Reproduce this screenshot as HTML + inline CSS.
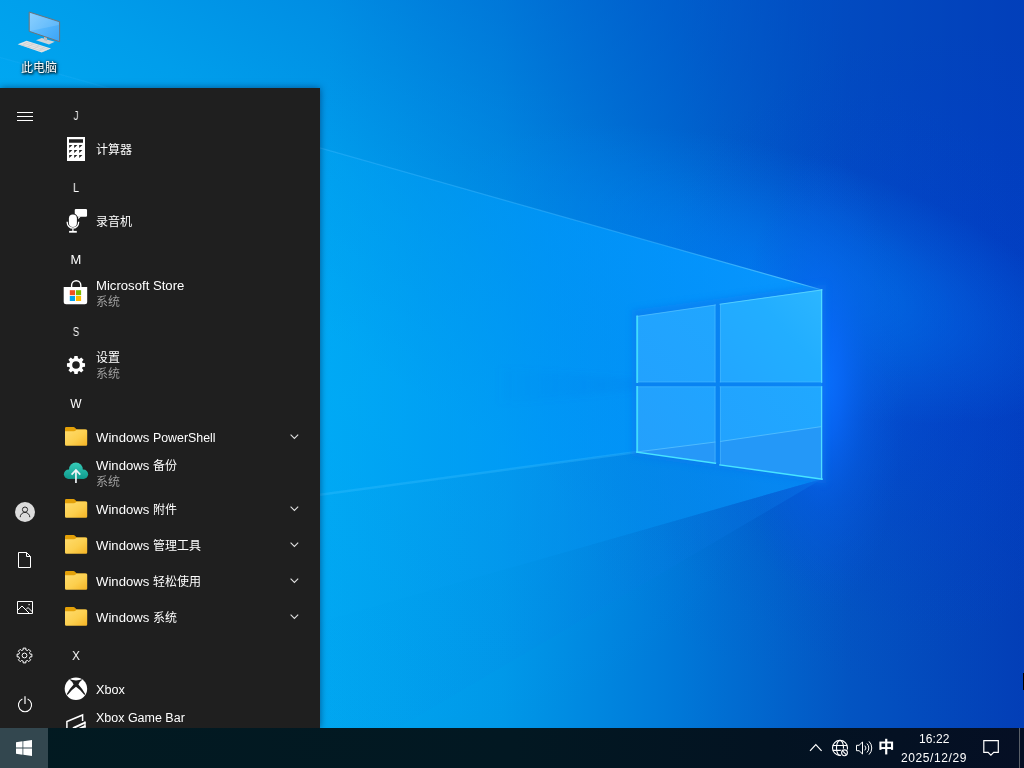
<!DOCTYPE html>
<html lang="zh-CN"><head><meta charset="utf-8"><title>Desktop</title>
<style>
html,body{margin:0;padding:0;background:#0560c8;}
body{width:1024px;height:768px;overflow:hidden;position:relative;font-family:"Liberation Sans",sans-serif;color:#fff;}
.abs,.cj{position:absolute;}
svg{display:block;overflow:visible}
.t{position:absolute;white-space:nowrap;font-size:12px;line-height:16px;color:#fff;transform-origin:0 0;will-change:transform;}
.cjt{font-family:"Liberation Sans","Noto Sans CJK SC",sans-serif;}

#menu{position:absolute;left:0;top:88px;width:320px;height:640px;background:#1f1f1f;overflow:hidden;box-shadow:0 0 7px rgba(0,20,60,.55)}

#task{position:absolute;left:0;top:728px;width:1024px;height:40px;background:linear-gradient(90deg,#021a21 0,#021822 50%,#031322 75%,#050f24 100%)}
#start{position:absolute;left:0;top:0;width:48px;height:40px;background:#33474f}

</style></head><body>
<svg class="abs" style="left:0;top:0" width="1024" height="768" viewBox="0 0 1024 768">
<defs>
<linearGradient id="bg" x1="0" y1="0" x2="1024" y2="0" gradientUnits="userSpaceOnUse">
<stop offset="0" stop-color="#00a8f0"/><stop offset="0.32" stop-color="#00a8f0"/><stop offset="0.49" stop-color="#0098e8"/><stop offset="0.66" stop-color="#0078d8"/><stop offset="0.83" stop-color="#0354c2"/><stop offset="1" stop-color="#033eb6"/>
</linearGradient>
<radialGradient id="lite" cx="330" cy="400" r="360" gradientUnits="userSpaceOnUse" gradientTransform="translate(330 400) scale(1.3 1) translate(-330 -400)">
<stop offset="0" stop-color="#00b0ff" stop-opacity="0.3"/><stop offset="0.5" stop-color="#00a8ff" stop-opacity="0.15"/><stop offset="1" stop-color="#00a0ff" stop-opacity="0"/>
</radialGradient>
<radialGradient id="glow" cx="822" cy="382" r="210" gradientUnits="userSpaceOnUse" gradientTransform="translate(822 382) scale(0.4 1.1) translate(-822 -382)">
<stop offset="0" stop-color="#0a70ff" stop-opacity="1"/><stop offset="0.25" stop-color="#0868f8" stop-opacity="0.8"/><stop offset="0.55" stop-color="#0660e8" stop-opacity="0.4"/><stop offset="1" stop-color="#0558d8" stop-opacity="0"/>
</radialGradient>
<radialGradient id="glow2" cx="830" cy="385" r="300" gradientUnits="userSpaceOnUse"><stop offset="0" stop-color="#0a64f4" stop-opacity="0.3"/><stop offset="0.4" stop-color="#0858e4" stop-opacity="0.12"/><stop offset="0.75" stop-color="#0650d4" stop-opacity="0.04"/><stop offset="1" stop-color="#0650d0" stop-opacity="0"/></radialGradient>
<radialGradient id="rblue" cx="950" cy="330" r="300" gradientUnits="userSpaceOnUse"><stop offset="0" stop-color="#023cd0" stop-opacity="0.5"/><stop offset="1" stop-color="#023cd0" stop-opacity="0"/></radialGradient>
<radialGradient id="glow3" cx="0" cy="0" r="1" gradientUnits="userSpaceOnUse" gradientTransform="translate(770 274) rotate(15.800) scale(330 125)"><stop offset="0" stop-color="#0088ff" stop-opacity="0.62"/><stop offset="0.35" stop-color="#008cff" stop-opacity="0.4"/><stop offset="0.7" stop-color="#0090ff" stop-opacity="0.16"/><stop offset="1" stop-color="#0090ff" stop-opacity="0"/></radialGradient>
<linearGradient id="beamA" x1="822" y1="0" x2="320" y2="0" gradientUnits="userSpaceOnUse">
<stop offset="0" stop-color="#0a98ff" stop-opacity="0.95"/><stop offset="0.25" stop-color="#0498ff" stop-opacity="0.85"/><stop offset="0.55" stop-color="#009afc" stop-opacity="0.7"/><stop offset="0.8" stop-color="#00a0f8" stop-opacity="0.45"/><stop offset="1" stop-color="#00a8f6" stop-opacity="0.3"/>
</linearGradient>
<linearGradient id="beamB" x1="760" y1="470" x2="330" y2="570" gradientUnits="userSpaceOnUse">
<stop offset="0" stop-color="#068ef6" stop-opacity="0.85"/><stop offset="0.3" stop-color="#0490f2" stop-opacity="0.55"/><stop offset="0.7" stop-color="#0894f0" stop-opacity="0.22"/><stop offset="1" stop-color="#08a0f0" stop-opacity="0.1"/>
</linearGradient>
<linearGradient id="beamC" x1="822" y1="479" x2="400" y2="700" gradientUnits="userSpaceOnUse">
<stop offset="0" stop-color="#0a78ec" stop-opacity="0.45"/><stop offset="0.3" stop-color="#0878e4" stop-opacity="0.2"/><stop offset="1" stop-color="#0888e8" stop-opacity="0.05"/>
</linearGradient>
<linearGradient id="ray1" x1="822" y1="0" x2="0" y2="0" gradientUnits="userSpaceOnUse">
<stop offset="0" stop-color="#60d0ff" stop-opacity="0.85"/><stop offset="0.2" stop-color="#40b8ff" stop-opacity="0.5"/><stop offset="0.6" stop-color="#40b8ff" stop-opacity="0.38"/><stop offset="0.75" stop-color="#40b8ff" stop-opacity="0.2"/><stop offset="1" stop-color="#40b8ff" stop-opacity="0.12"/>
</linearGradient>
<linearGradient id="pTL" x1="637" y1="382" x2="715" y2="305" gradientUnits="userSpaceOnUse"><stop offset="0" stop-color="#22a2fe"/><stop offset="1" stop-color="#20a6ff"/></linearGradient>
<linearGradient id="pTR" x1="720" y1="382" x2="822" y2="290" gradientUnits="userSpaceOnUse"><stop offset="0" stop-color="#22a6ff"/><stop offset="0.6" stop-color="#22aeff"/><stop offset="1" stop-color="#2cb6ff"/></linearGradient>
<linearGradient id="pBL" x1="637" y1="452" x2="715" y2="387" gradientUnits="userSpaceOnUse"><stop offset="0" stop-color="#24a0fc"/><stop offset="1" stop-color="#20a4ff"/></linearGradient>
<linearGradient id="pBR" x1="720" y1="464" x2="822" y2="387" gradientUnits="userSpaceOnUse"><stop offset="0" stop-color="#22a2fe"/><stop offset="1" stop-color="#20a8ff"/></linearGradient>
<linearGradient id="shd" x1="320" y1="0" x2="328" y2="0" gradientUnits="userSpaceOnUse"><stop offset="0" stop-color="#002040" stop-opacity="0.45"/><stop offset="0.4" stop-color="#002040" stop-opacity="0.15"/><stop offset="1" stop-color="#002040" stop-opacity="0"/></linearGradient>
<linearGradient id="topd" x1="800" y1="0" x2="500" y2="450" gradientUnits="userSpaceOnUse"><stop offset="0" stop-color="#0040be" stop-opacity="0.5"/><stop offset="0.16" stop-color="#0040be" stop-opacity="0.45"/><stop offset="0.34" stop-color="#0040be" stop-opacity="0.35"/><stop offset="0.5" stop-color="#0040be" stop-opacity="0.25"/><stop offset="0.75" stop-color="#0040be" stop-opacity="0.1"/><stop offset="1" stop-color="#0040be" stop-opacity="0"/></linearGradient>
<linearGradient id="wedge" x1="636" y1="0" x2="470" y2="0" gradientUnits="userSpaceOnUse"><stop offset="0" stop-color="#0470e0" stop-opacity="0.16"/><stop offset="1" stop-color="#0470e0" stop-opacity="0"/></linearGradient>
<filter id="b1"><feGaussianBlur stdDeviation="0.7"/></filter>
<filter id="b3"><feGaussianBlur stdDeviation="3"/></filter>
<filter id="b8"><feGaussianBlur stdDeviation="8"/></filter>
</defs>
<rect width="1024" height="768" fill="url(#bg)"/>
<rect width="1024" height="768" fill="url(#lite)"/>
<rect width="1024" height="768" fill="url(#topd)"/>
<rect width="1024" height="768" fill="url(#rblue)"/>
<rect width="1024" height="768" fill="url(#glow2)"/>
<rect width="1024" height="768" fill="url(#glow3)"/>
<rect width="1024" height="768" fill="url(#glow)"/>
<polygon points="822,290 0,57.4 0,538 637,452 822,479" fill="url(#beamA)"/>
<polygon points="822,479 637,452 0,538 0,713" fill="url(#beamB)"/>
<polygon points="822,479 0,713 0,768 330,768" fill="url(#beamC)"/>
<line x1="822" y1="290" x2="0" y2="57.4" stroke="url(#ray1)" stroke-width="1.2" filter="url(#b1)"/>
<line x1="637" y1="452" x2="0" y2="538" stroke="#40c0ff" stroke-opacity="0.3" stroke-width="2.5" filter="url(#b1)"/>
<polygon points="636,379 636,390 500,404 500,368" fill="url(#wedge)" filter="url(#b3)"/>
<g id="logo">
<polygon points="632,310 826,284 826,484 632,456" fill="#0878ee" opacity="0.55" filter="url(#b3)"/>
<polygon points="636.5,316.2 715.4,304.7 715.4,382.2 636.5,382.2" fill="url(#pTL)"/>
<polygon points="720,304 822,289.6 822,382.2 720,382.2" fill="url(#pTR)"/>
<polygon points="636.5,386.4 715.4,386.4 715.4,463 636.5,452" fill="url(#pBL)"/>
<polygon points="720,386.4 822,386.4 822,479 720,464.6" fill="url(#pBR)"/>
<polygon points="636.5,452 715.4,442 715.4,463" fill="#2698f8"/>
<polygon points="720,441.5 822,426.5 822,479 720,464.6" fill="#2498f8"/>
<path d="M636.5,452L715.4,442M720,441.5L822,426.5" stroke="#5cc4ff" stroke-width="1" opacity="0.75" fill="none"/>
<g fill="none" stroke-linecap="square">
<path d="M637.2,316.5V382 M637.2,387V451.8" stroke="#40dcfc" stroke-width="1.8"/>
<path d="M637,452.2L715.4,463.2 M720,464.9L822,479.2" stroke="#48e4ff" stroke-width="1.5"/>
<path d="M821.6,290V382 M821.6,387V479" stroke="#50dcff" stroke-width="1.3"/>
<path d="M720,304.2L822,289.9" stroke="#60d8ff" stroke-width="1" opacity="0.8"/>
<path d="M637,316.4L715.4,305" stroke="#60c8ff" stroke-width="1" opacity="0.6"/>
<path d="M715,305V382 M715,387V463 M720.4,304.5V382 M720.4,387V464.5" stroke="#58c0ff" stroke-width="0.8" opacity="0.6"/>
<path d="M637,381.9H715.4 M720,381.9H822 M637,386.8H715.4 M720,386.8H822" stroke="#58c0ff" stroke-width="0.8" opacity="0.5"/>
</g>
</g>
<rect x="1023" y="673" width="1" height="17" fill="#000"/>
</svg><svg class="abs" style="left:14px;top:6px" width="52" height="52" viewBox="14 6 52 52">
<defs><linearGradient id="scr" x1="29" y1="12" x2="60" y2="42" gradientUnits="userSpaceOnUse"><stop offset="0" stop-color="#7ccaff"/><stop offset="0.5" stop-color="#56b6fc"/><stop offset="1" stop-color="#3aa4f6"/></linearGradient></defs>
<polygon points="36,40.2 41.8,38 54.7,41.8 49,44.4" fill="#cfd4d8"/>
<polygon points="44,36 47,36.800 47,41 44,40.300" fill="#b8bec4"/>
<polygon points="29.2,12 59.6,21.700 59.600,41.700 29.200,31.300" fill="url(#scr)" stroke="#6e7479" stroke-width="1"/>
<polygon points="30,13.200 58.800,22.300 58.800,25 30,31" fill="#fff" opacity="0.13"/>
<polygon points="17.700,44.300 26.600,40.800 51,48.400 41.700,52.400" fill="#e4e6e8"/>
<path d="M20.500,44.500L44,51.500M23.400,43.300L46.500,50.400M26,42.200L49,49.300M22,46l4.500-3.800M27,47.600l6.500-4.200M33,49.400l6.500-4.200M38.500,51l6.500-4.200" stroke="#c3c7ca" stroke-width="0.6" fill="none"/>
</svg>
<div class="t cjt" style="left:21.3px;top:59.6px;filter:drop-shadow(1px 1px 1px rgba(0,0,0,.9)) drop-shadow(0 0 1.5px rgba(0,0,0,.6))">此电脑</div><div id="menu"><svg class="abs" style="left:17px;top:24px" width="16" height="9" viewBox="0 0 16 9" ><path d="M0 0h16v1H0zM0 4h16v1H0zM0 8h16v1H0z" fill="#fff"/></svg>
<svg class="abs" style="left:15px;top:414px" width="20" height="20" viewBox="0 0 20 20" ><circle cx="10" cy="10" r="10" fill="#dcdcdc"/><circle cx="10" cy="7.6" r="2.6" fill="none" stroke="#2b2b2b" stroke-width="1"/><path d="M5.2 15.2a4.8 4.8 0 0 1 9.6 0" fill="none" stroke="#2b2b2b" stroke-width="1"/></svg>
<svg class="abs" style="left:18px;top:464px" width="13" height="16" viewBox="0 0 13 16" ><path d="M.5 .5h8l4 4v11H.5z" fill="none" stroke="#fff" stroke-width="1"/><path d="M8.5 .5v4h4" fill="none" stroke="#fff" stroke-width="1"/></svg>
<svg class="abs" style="left:17px;top:513px" width="16" height="13" viewBox="0 0 16 13" ><path d="M.5 .5h15v12H.5z" fill="none" stroke="#fff"/><path d="M.5 9.5l4.5-4.5 7 7M9 8.5l2-2 4.5 4.5" fill="none" stroke="#fff"/><rect x="11.5" y="3" width="1.2" height="1.2" fill="#fff"/></svg>
<svg class="abs" style="left:16.2px;top:559.2px" width="17" height="17" viewBox="0 0 17 17" ><path d="M7.19,2.85 L7.12,1.13 L9.88,1.13 L9.81,2.85 L11.57,3.58 L12.74,2.31 L14.69,4.26 L13.42,5.43 L14.15,7.19 L15.87,7.12 L15.87,9.88 L14.15,9.81 L13.42,11.57 L14.69,12.74 L12.74,14.69 L11.57,13.42 L9.81,14.15 L9.88,15.87 L7.12,15.87 L7.19,14.15 L5.43,13.42 L4.26,14.69 L2.31,12.74 L3.58,11.57 L2.85,9.81 L1.13,9.88 L1.13,7.12 L2.85,7.19 L3.58,5.43 L2.31,4.26 L4.26,2.31 L5.43,3.58Z" fill="none" stroke="#fff" stroke-width="1" stroke-linejoin="round"/><circle cx="8.5" cy="8.5" r="2.4" fill="none" stroke="#fff" stroke-width="1"/></svg>
<svg class="abs" style="left:17px;top:607px" width="16" height="18" viewBox="0 0 16 18" ><path d="M5.4 4.100a6.600 6.600 0 1 0 5.200 0" fill="none" stroke="#fff" stroke-width="1.1"/><path d="M8 1.200v7.800" stroke="#fff" stroke-width="1.2"/></svg>
<div class="t" style="left:56px;top:20.042px;width:40px;text-align:center;transform-origin:50% 0;transform:scaleX(0.8)">J</div>
<div class="t" style="left:56px;top:92.042px;width:40px;text-align:center;transform-origin:50% 0;transform:scaleX(0.88)">L</div>
<div class="t" style="left:56px;top:164.042px;width:40px;text-align:center;transform-origin:50% 0;transform:scaleX(1.08)">M</div>
<div class="t" style="left:56px;top:236.042px;width:40px;text-align:center;transform-origin:50% 0;transform:scaleX(0.8)">S</div>
<div class="t" style="left:56px;top:308.042px;width:40px;text-align:center;transform-origin:50% 0;transform:scaleX(1)">W</div>
<div class="t" style="left:56px;top:559.842px;width:40px;text-align:center;transform-origin:50% 0;transform:scaleX(0.95)">X</div>
<svg class="abs" style="left:67px;top:49px" width="18" height="24" viewBox="0 0 18 24" ><path fill="#fff" fill-rule="evenodd" d="M0 0h18v24H0zM2 2.2h14v3.5H2zM2.2 7.9h3.2l-3.2 3.2zM7.2 7.9h3.2l-3.2 3.2zM12.2 7.9h3.2l-3.2 3.2zM2.2 12.9h3.2l-3.2 3.2zM7.2 12.9h3.2l-3.2 3.2zM12.2 12.9h3.2l-3.2 3.2zM2.2 17.9h3.2l-3.2 3.2zM7.2 17.9h3.2l-3.2 3.2zM12.2 17.9h3.2l-3.2 3.2z"/></svg>
<svg class="abs" style="left:64px;top:119px" width="26" height="28" viewBox="0 0 26 28" ><rect x="10.75" y="2" width="12.3" height="7.8" rx="1.1" fill="#fff"/><path d="M14.2 9.5h2.6l-2.6 2.8z" fill="#fff"/>
<rect x="4.9" y="7.6" width="8" height="12.4" rx="4" fill="#fff" stroke="#1f1f1f" stroke-width="2.2" paint-order="stroke"/>
<path d="M3.2 14.8v.65a5.7 5.7 0 0 0 11.4 0v-.65" fill="none" stroke="#fff" stroke-width="1.3"/><path d="M8.9 21.5v2.6" stroke="#fff" stroke-width="1.3"/><rect x="5.1" y="23.9" width="7.7" height="1.8" fill="#fff"/></svg>
<svg class="abs" style="left:62px;top:191px" width="28" height="27" viewBox="0 0 28 27" ><path d="M9.6 8.5v-2.2a4.6 4.6 0 0 1 9.2 0v2.2" fill="none" stroke="#fff" stroke-width="1.4"/>
<path d="M1.7 8h23.5v14.8a2.5 2.5 0 0 1-2.5 2.5H4.2a2.5 2.5 0 0 1-2.5-2.5z" fill="#fff"/>
<rect x="7.8" y="11.2" width="5.2" height="5" fill="#f25022"/><rect x="13.9" y="11.2" width="5.2" height="5" fill="#7fba00"/><rect x="7.8" y="17" width="5.2" height="5" fill="#00a4ef"/><rect x="13.9" y="17" width="5.2" height="5" fill="#ffb900"/></svg>
<svg class="abs" style="left:64px;top:265px" width="24" height="24" viewBox="0 0 24 24" ><path fill="#fff" fill-rule="evenodd" d="M10.07,5.37 L10.35,2.95 L13.65,2.95 L13.93,5.37 L15.32,5.95 L17.23,4.43 L19.57,6.77 L18.05,8.68 L18.63,10.07 L21.05,10.35 L21.05,13.65 L18.63,13.93 L18.05,15.32 L19.57,17.23 L17.23,19.57 L15.32,18.05 L13.93,18.63 L13.65,21.05 L10.35,21.05 L10.07,18.63 L8.68,18.05 L6.77,19.57 L4.43,17.23 L5.95,15.32 L5.37,13.93 L2.95,13.65 L2.95,10.35 L5.37,10.07 L5.95,8.68 L4.43,6.77 L6.77,4.43 L8.68,5.95Z M15.8,12a3.8,3.8 0 1 0 -7.6,0a3.8,3.8 0 1 0 7.6,0z"/></svg>
<svg width="0" height="0" style="position:absolute"><defs><linearGradient id="fg" x1="0" y1="0" x2="1" y2="1"><stop offset="0" stop-color="#ffdc6e"/><stop offset="0.55" stop-color="#fccf4e"/><stop offset="1" stop-color="#f5b425"/></linearGradient><linearGradient id="cg" x1="0" y1="2.6" x2="0" y2="18.9" gradientUnits="userSpaceOnUse"><stop offset="0" stop-color="#36ccb8"/><stop offset="1" stop-color="#0f9b8e"/></linearGradient></defs></svg>
<svg class="abs" style="left:64px;top:338px" width="24" height="21" viewBox="0 0 24 21" ><path d="M1 2.2a1.2 1.2 0 0 1 1.2-1.2h7.3c.5 0 .9.2 1.2.5l1.6 1.6c.3.3.7.5 1.2.5H21a1.2 1.2 0 0 1 1.2 1.2V8H1z" fill="#e3a008"/>
<path d="M1 5.3l9-.1c.5 0 .9-.15 1.3-.45l1.2-.9c.4-.3.8-.45 1.3-.45H22a1.2 1.2 0 0 1 1.2 1.2V18.6a1.2 1.2 0 0 1-1.2 1.2H2.2A1.2 1.2 0 0 1 1 18.600z" fill="url(#fg)"/></svg>
<svg class="abs" style="left:64px;top:410px" width="24" height="21" viewBox="0 0 24 21" ><path d="M1 2.2a1.2 1.2 0 0 1 1.2-1.2h7.3c.5 0 .9.2 1.2.5l1.6 1.6c.3.3.7.5 1.2.5H21a1.2 1.2 0 0 1 1.2 1.2V8H1z" fill="#e3a008"/>
<path d="M1 5.3l9-.1c.5 0 .9-.15 1.3-.45l1.2-.9c.4-.3.8-.45 1.3-.45H22a1.2 1.2 0 0 1 1.2 1.2V18.6a1.2 1.2 0 0 1-1.2 1.2H2.2A1.2 1.2 0 0 1 1 18.600z" fill="url(#fg)"/></svg>
<svg class="abs" style="left:64px;top:446px" width="24" height="21" viewBox="0 0 24 21" ><path d="M1 2.2a1.2 1.2 0 0 1 1.2-1.2h7.3c.5 0 .9.2 1.2.5l1.6 1.6c.3.3.7.5 1.2.5H21a1.2 1.2 0 0 1 1.2 1.2V8H1z" fill="#e3a008"/>
<path d="M1 5.3l9-.1c.5 0 .9-.15 1.3-.45l1.2-.9c.4-.3.8-.45 1.3-.45H22a1.2 1.2 0 0 1 1.2 1.2V18.6a1.2 1.2 0 0 1-1.2 1.2H2.2A1.2 1.2 0 0 1 1 18.600z" fill="url(#fg)"/></svg>
<svg class="abs" style="left:64px;top:482px" width="24" height="21" viewBox="0 0 24 21" ><path d="M1 2.2a1.2 1.2 0 0 1 1.2-1.2h7.3c.5 0 .9.2 1.2.5l1.6 1.6c.3.3.7.5 1.2.5H21a1.2 1.2 0 0 1 1.2 1.2V8H1z" fill="#e3a008"/>
<path d="M1 5.3l9-.1c.5 0 .9-.15 1.3-.45l1.2-.9c.4-.3.8-.45 1.3-.45H22a1.2 1.2 0 0 1 1.2 1.2V18.6a1.2 1.2 0 0 1-1.2 1.2H2.2A1.2 1.2 0 0 1 1 18.600z" fill="url(#fg)"/></svg>
<svg class="abs" style="left:64px;top:518px" width="24" height="21" viewBox="0 0 24 21" ><path d="M1 2.2a1.2 1.2 0 0 1 1.2-1.2h7.3c.5 0 .9.2 1.2.5l1.6 1.6c.3.3.7.5 1.2.5H21a1.2 1.2 0 0 1 1.2 1.2V8H1z" fill="#e3a008"/>
<path d="M1 5.3l9-.1c.5 0 .9-.15 1.3-.45l1.2-.9c.4-.3.8-.45 1.3-.45H22a1.2 1.2 0 0 1 1.2 1.2V18.6a1.2 1.2 0 0 1-1.2 1.2H2.2A1.2 1.2 0 0 1 1 18.600z" fill="url(#fg)"/></svg>
<svg class="abs" style="left:62px;top:372px" width="28" height="26" viewBox="0 0 28 26" ><g fill="url(#cg)"><circle cx="13.9" cy="9.5" r="6.9"/><circle cx="6.6" cy="14.2" r="4.7"/><circle cx="21.4" cy="14.2" r="4.7"/><rect x="6.6" y="12" width="14.8" height="6.9"/></g>
<path d="M9.6 14.6l4.35-4.6 4.35 4.6M13.95 10.6v12.3" fill="none" stroke="#eef3f6" stroke-width="1.7"/></svg>
<svg class="abs" style="left:64px;top:589px" width="24" height="24" viewBox="0 0 24 24" ><circle cx="11.93" cy="11.75" r="11.25" fill="#fff"/><path d="M12.00,3.45 Q15.25,3.30 18.04,2.25 L18.49,2.62 Q15.47,4.81 14.42,7.45 Q18.04,11.23 21.21,17.04 L20.45,17.94 Q16.53,12.74 12.00,9.72 Q7.47,12.74 3.55,17.94 L2.79,17.04 Q5.96,11.23 9.58,7.45 Q8.53,4.81 5.51,2.62 L5.96,2.25 Q8.75,3.30 12.00,3.45Z" fill="#1f1f1f"/></svg>
<svg class="abs" style="left:64px;top:624px" width="24" height="18" viewBox="0 0 24 18" ><path d="M2.9 18V9.6L18.6 3v6" fill="none" stroke="#fff" stroke-width="1.5"/><path d="M9 16.2L21.5 10.3M11.5 18.6L21.5 13.9" stroke="#fff" stroke-width="2" fill="none"/><path d="M21 9.6v9" stroke="#fff" stroke-width="1.3"/></svg>
<svg class="abs" style="left:289.6px;top:345.9px" width="9" height="6" viewBox="0 0 9 6" ><path d="M.6 .6L4.4 4.4 8.2 .6" fill="none" stroke="#e0e0e0" stroke-width="1.1"/></svg>
<svg class="abs" style="left:289.6px;top:417.9px" width="9" height="6" viewBox="0 0 9 6" ><path d="M.6 .6L4.4 4.4 8.2 .6" fill="none" stroke="#e0e0e0" stroke-width="1.1"/></svg>
<svg class="abs" style="left:289.6px;top:453.9px" width="9" height="6" viewBox="0 0 9 6" ><path d="M.6 .6L4.4 4.4 8.2 .6" fill="none" stroke="#e0e0e0" stroke-width="1.1"/></svg>
<svg class="abs" style="left:289.6px;top:489.9px" width="9" height="6" viewBox="0 0 9 6" ><path d="M.6 .6L4.4 4.4 8.2 .6" fill="none" stroke="#e0e0e0" stroke-width="1.1"/></svg>
<svg class="abs" style="left:289.6px;top:525.9px" width="9" height="6" viewBox="0 0 9 6" ><path d="M.6 .6L4.4 4.4 8.2 .6" fill="none" stroke="#e0e0e0" stroke-width="1.1"/></svg>
<div class="t cjt" style="left:96px;top:53.65px;">计算器</div>
<div class="t cjt" style="left:96px;top:125.65px;">录音机</div>
<div class="t" style="left:96.3px;top:189.642px;transform:scaleX(1.095);">Microsoft Store</div>
<div class="t cjt" style="left:96px;top:206.15px;color:#9e9e9e;">系统</div>
<div class="t cjt" style="left:96px;top:261.9px;">设置</div>
<div class="t cjt" style="left:96px;top:278.15px;color:#9e9e9e;">系统</div>
<div class="t" style="left:96px;top:341.842px;transform:scaleX(1.095);">Windows</div><div class="t" style="left:153px;top:341.842px;transform:scaleX(1.03);">PowerShell</div>
<div class="t" style="left:96px;top:369.642px;transform:scaleX(1.095);">Windows</div><div class="t cjt" style="left:152.5px;top:369.64px;">备份</div>
<div class="t cjt" style="left:96px;top:386.15px;color:#9e9e9e;">系统</div>
<div class="t" style="left:96px;top:413.842px;transform:scaleX(1.095);">Windows</div><div class="t cjt" style="left:152.5px;top:413.84px;">附件</div>
<div class="t" style="left:96px;top:449.842px;transform:scaleX(1.095);">Windows</div><div class="t cjt" style="left:152.5px;top:449.84px;">管理工具</div>
<div class="t" style="left:96px;top:485.842px;transform:scaleX(1.095);">Windows</div><div class="t cjt" style="left:152.5px;top:485.84px;">轻松使用</div>
<div class="t" style="left:96px;top:521.842px;transform:scaleX(1.095);">Windows</div><div class="t cjt" style="left:152.5px;top:521.84px;">系统</div>
<div class="t" style="left:96px;top:593.642px;transform:scaleX(1.056);">Xbox</div>
<div class="t" style="left:96px;top:621.642px;transform:scaleX(1.04);">Xbox Game Bar</div></div><div id="task"><div id="start"></div>
<svg class="abs" style="left:16px;top:12px" width="16" height="16" viewBox="0 0 16 16"><path fill="#fff" d="M0 2.25L6.5 1.35V7.6H0zM7.3 1.25L16 0V7.6H7.3zM0 8.4H6.5V14.65L0 13.75zM7.3 8.4H16V16L7.3 14.75z"/></svg>
<svg class="abs" style="left:809px;top:15px" width="14" height="9" viewBox="0 0 14 9"><path d="M1 7.8L6.8 1.6 12.6 7.8" fill="none" stroke="#fff" stroke-width="1.2"/></svg>
<svg class="abs" style="left:831px;top:11px" width="18" height="18" viewBox="0 0 18 18"><g fill="none" stroke="#fff" stroke-width="1.1"><circle cx="9" cy="8.9" r="7.5"/><ellipse cx="9" cy="8.900" rx="3.5" ry="7.500"/><path d="M1.900 6.500h14.200M1.900 11.400h14.200"/></g>
<circle cx="13.5" cy="13.800" r="4.4" fill="#051024"/><circle cx="13.5" cy="13.800" r="2.900" fill="none" stroke="#fff" stroke-width="1.1"/><path d="M11.500 11.800l4 4" stroke="#fff" stroke-width="1.1"/></svg>
<svg class="abs" style="left:855px;top:12px" width="18" height="16" viewBox="0 0 18 16"><path d="M1.5 5.3h2.6l3.4-3.3v12L4.100 10.7H1.5z" fill="none" stroke="#fff" stroke-width="1"/>
<path d="M9.8 5.6a3.4 3.4 0 0 1 0 4.800M11.900 3.500a6.300 6.300 0 0 1 0 9M14 1.400a9.300 9.300 0 0 1 0 13.200" fill="none" stroke="#fff" stroke-width="1"/></svg>
<div class="t cjt" style="left:878.2px;top:9.5px;font-size:16.5px;line-height:19.8px;font-weight:bold;transform-origin:50% 50%;transform:scaleY(.92)">中</div>
<div class="t" style="left:919.3px;top:2.542px;font-size:12px;letter-spacing:0.1px;">16:22</div>
<div class="t" style="left:900.6px;top:21.642px;font-size:12px;letter-spacing:0.6px;">2025/12/29</div>
<svg class="abs" style="left:982px;top:11px" width="18" height="18" viewBox="0 0 18 18"><path d="M1.8 1.600h14.500v11.800h-4.600L8.900 16.200 6.100 13.400H1.800z" fill="none" stroke="#fff" stroke-width="1.2"/></svg>
<div class="abs" style="left:1019px;top:0;width:1px;height:40px;background:#5a6068"></div></div>
</body></html>
